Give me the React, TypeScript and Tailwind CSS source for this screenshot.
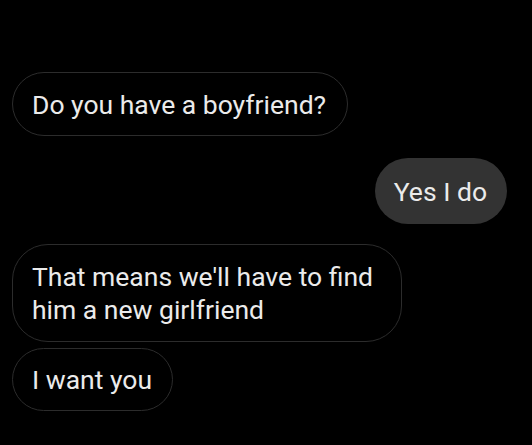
import React from "react";

export default function App() {
  const font = { fontFamily: "Roboto, 'Noto Sans', sans-serif" };
  return (
    <div className="w-[532px] h-[445px] bg-black overflow-hidden" style={font}>
      <div className="flex flex-col pt-[72px] px-[12px] text-[26.5px] leading-[33px] text-[#ebebeb]">
        <div className="self-start rounded-[32px] border border-[#2c2c2c] pl-[19px] pr-[21px] pt-[15px] pb-[14px]">
          Do you have a boyfriend?
        </div>
        <div className="self-end mt-[22px] mr-[13px] rounded-[33px] bg-[#333333] pl-[19px] pr-[20px] pt-[17px] pb-[16px]">
          Yes I do
        </div>
        <div className="self-start mt-[20px] rounded-[36px] border border-[#2c2c2c] pl-[19px] pr-[20px] py-[15px] w-[390px]">
          That means we'll have to find him a new girlfriend
        </div>
        <div className="self-start mt-[6px] rounded-[32px] border border-[#2c2c2c] pl-[19px] pr-[20px] py-[14px]">
          I want you
        </div>
      </div>
    </div>
  );
}
